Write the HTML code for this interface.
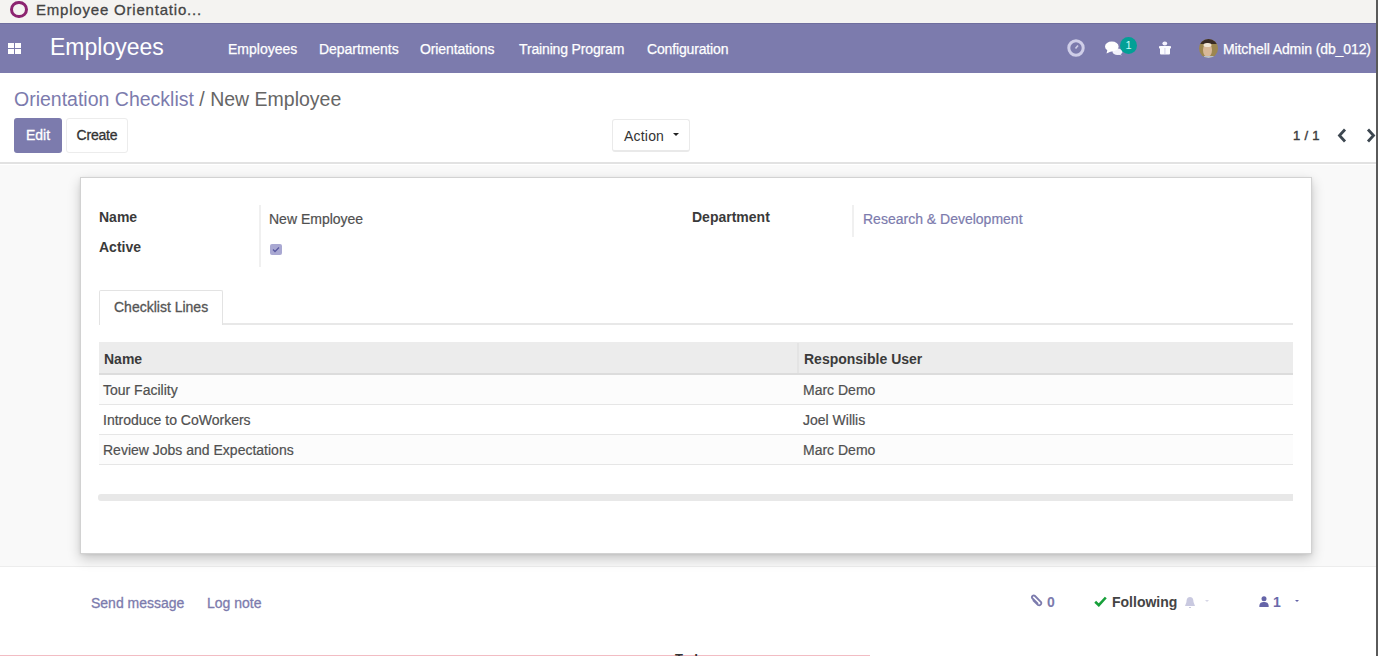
<!DOCTYPE html>
<html><head><meta charset="utf-8">
<style>
*{box-sizing:border-box;margin:0;padding:0}
html,body{width:1378px;height:656px;overflow:hidden;background:#fff;font-family:"Liberation Sans",sans-serif;color:#4c4c4c;position:relative}
.a{position:absolute;white-space:nowrap}
#tabbar{left:0;top:0;width:1378px;height:23px;background:#f4f3f1}
#nav{left:0;top:23px;width:1378px;height:50px;background:#7c7bad;border-top:1px solid #6f6e9e}
.nv{color:#fff;font-size:14px;top:41px;-webkit-text-stroke:0.25px #fff}
#cp{left:0;top:73px;width:1378px;height:91px;background:#fff;border-bottom:2px solid #e2e2e2}
#bg{left:0;top:165px;width:1378px;height:402px;background:#f9f9f9;border-bottom:1px solid #ededed}
#sheet{left:80px;top:177px;width:1232px;height:377px;background:#fff;border:1px solid #d2d2d2;box-shadow:0 5px 12px rgba(0,0,0,.2),0 1px 3px rgba(0,0,0,.08)}
.lbl{font-weight:bold;font-size:14px;color:#3a3a3a}
.val{font-size:14px;color:#505050;-webkit-text-stroke:0.2px currentColor}
.vl{width:2px;background:#f0f0f0}
.rl{left:99px;width:1194px;height:1px;background:#e6e6e6}
</style></head><body>
<div class="a" id="tabbar"></div>
<div class="a" style="left:10px;top:1px;width:17.5px;height:17px;border:3.8px solid #8c2470;border-radius:50%"></div>
<div class="a" style="left:36px;top:1px;font-size:15px;font-weight:normal;-webkit-text-stroke:0.3px #444;color:#444;letter-spacing:0.8px">Employee Orientatio...</div>

<div class="a" id="nav"></div>
<div class="a" style="left:8px;top:43px;width:6px;height:5px;background:#fff"></div>
<div class="a" style="left:15px;top:43px;width:6px;height:5px;background:#fff"></div>
<div class="a" style="left:8px;top:49px;width:6px;height:5px;background:#fff"></div>
<div class="a" style="left:15px;top:49px;width:6px;height:5px;background:#fff"></div>
<div class="a" style="left:50px;top:34px;font-size:23px;color:#fff">Employees</div>
<div class="a nv" style="left:228px;letter-spacing:0px">Employees</div>
<div class="a nv" style="left:319px;letter-spacing:-0.05px">Departments</div>
<div class="a nv" style="left:420px;letter-spacing:-0.1px">Orientations</div>
<div class="a nv" style="left:519px;letter-spacing:-0.15px">Training Program</div>
<div class="a nv" style="left:647px;letter-spacing:-0.15px">Configuration</div>
<div class="a nv" style="left:1223px;letter-spacing:-0.1px">Mitchell Admin (db_012)</div>

<!-- right nav icons -->
<svg class="a" style="left:1066px;top:38px" width="20" height="20" viewBox="0 0 20 20"><circle cx="10" cy="10" r="7.2" fill="none" stroke="#cfcee8" stroke-width="3"/><path d="M9.5 10.5 L12 7.5" fill="none" stroke="#cfcee8" stroke-width="1.6"/></svg>
<svg class="a" style="left:1104px;top:40px" width="20" height="16" viewBox="0 0 20 16"><ellipse cx="13.5" cy="11.8" rx="5" ry="3.2" fill="#f2f2fb"/><path d="M15 13 L18 15.5 L12 14Z" fill="#f2f2fb"/><ellipse cx="7.8" cy="6.5" rx="6.8" ry="5" fill="#fff"/><path d="M3.5 9.5 L2.5 13.5 L8 11Z" fill="#fff"/></svg>
<div class="a" style="left:1120px;top:37px;width:17px;height:17px;border-radius:50%;background:#02a096;color:#c8fbf6;font-size:11px;text-align:center;line-height:17px">1</div>
<svg class="a" style="left:1158px;top:40px" width="14" height="16" viewBox="0 0 14 16"><ellipse cx="6.8" cy="3.4" rx="2.4" ry="2" fill="#f4f2ff"/><rect x="2" y="6" width="10" height="8.5" rx="1" fill="#fbfbff"/><rect x="1" y="6.2" width="12" height="2.2" fill="#fbfbff"/><rect x="6.3" y="8" width="1.2" height="6" fill="#d8d6ee"/></svg>
<svg class="a" style="left:1198px;top:38px" width="21" height="21" viewBox="0 0 21 21"><defs><clipPath id="cc"><circle cx="10.5" cy="10.5" r="9.5"/></clipPath></defs><g clip-path="url(#cc)"><rect width="21" height="21" fill="#9c8650"/><rect x="0" y="0" width="21" height="6" fill="#3a2c24"/><ellipse cx="9.5" cy="12" rx="4.5" ry="7" fill="#d8b898"/><ellipse cx="9.5" cy="7" rx="4" ry="2" fill="#efe4d4"/><rect x="6" y="18" width="10" height="4" fill="#b8c0cc"/></g></svg>

<div class="a" id="cp"></div>
<div class="a" style="left:14px;top:88px;font-size:19.5px;color:#7c7bad">Orientation Checklist <span style="color:#666">/ New Employee</span></div>
<div class="a" style="left:14px;top:118px;width:48px;height:35px;background:#7c7bad;border-radius:3px;color:#fff;font-size:14px;line-height:35px;text-align:center;-webkit-text-stroke:0.3px #fff">Edit</div>
<div class="a" style="left:66px;top:118px;width:62px;height:35px;background:#fff;border:1px solid #ececec;border-radius:3px;color:#333;font-size:14px;line-height:33px;text-align:center;letter-spacing:-0.2px;-webkit-text-stroke:0.3px #333">Create</div>
<div class="a" style="left:612px;top:119px;width:78px;height:33px;background:#fff;border:1px solid #eaeaea;border-bottom:2px solid #e9e9e9;border-radius:3px;color:#333;font-size:14px;line-height:33px;padding-left:11px;letter-spacing:0.2px">Action</div>
<div class="a" style="left:673px;top:133px;width:0;height:0;border-left:3px solid transparent;border-right:3px solid transparent;border-top:3px solid #222"></div>
<div class="a" style="left:1293px;top:128px;font-size:13px;color:#3c3c3c;-webkit-text-stroke:0.4px #3c3c3c;letter-spacing:0.3px">1 / 1</div>
<svg class="a" style="left:1336px;top:128px" width="12" height="15" viewBox="0 0 12 15"><path d="M9 1.5 L3.5 7.5 L9 13.5" fill="none" stroke="#3d4750" stroke-width="2.8"/></svg>
<svg class="a" style="left:1365px;top:128px" width="12" height="15" viewBox="0 0 12 15"><path d="M3 1.5 L8.5 7.5 L3 13.5" fill="none" stroke="#3d4750" stroke-width="2.8"/></svg>

<div class="a" id="bg"></div>
<div class="a" id="sheet"></div>
<div class="a lbl" style="left:99px;top:209px">Name</div>
<div class="a lbl" style="left:99px;top:239px">Active</div>
<div class="a vl" style="left:259px;top:205px;height:62px"></div>
<div class="a val" style="left:269px;top:211px">New Employee</div>
<div class="a" style="left:270px;top:244px;width:12px;height:11px;background:#a9a8d2;border-radius:2px"></div>
<svg class="a" style="left:270px;top:244px" width="12" height="11" viewBox="0 0 12 11"><path d="M3 5.5 L5 7.5 L9 3.5" fill="none" stroke="#5a59a0" stroke-width="1.3"/></svg>
<div class="a lbl" style="left:692px;top:209px">Department</div>
<div class="a vl" style="left:852px;top:205px;height:32px"></div>
<div class="a val" style="left:863px;top:211px;color:#7c7bad">Research &amp; Development</div>

<div class="a" style="left:99px;top:323px;width:1194px;height:2px;background:#e8e8e8"></div>
<div class="a" style="left:99px;top:290px;width:124px;height:35px;border:1px solid #e3e3e3;border-bottom:none;background:#fff;font-size:14px;color:#555;line-height:33px;padding-left:14px;-webkit-text-stroke:0.3px #555;border-radius:2px 2px 0 0">Checklist Lines</div>

<div class="a" style="left:99px;top:342px;width:1194px;height:33px;background:#ececec;border-bottom:2px solid #dcdcdc"></div>
<div class="a" style="left:797px;top:343px;width:2px;height:30px;background:#e4e4e4"></div>
<div class="a lbl" style="left:104px;top:351px">Name</div>
<div class="a lbl" style="left:804px;top:351px">Responsible User</div>
<div class="a" style="left:99px;top:375px;width:1194px;height:29px;background:#fcfcfc"></div>
<div class="a" style="left:99px;top:435px;width:1194px;height:29px;background:#fcfcfc"></div>
<div class="a rl" style="top:404px"></div>
<div class="a rl" style="top:434px"></div>
<div class="a rl" style="top:464px"></div>
<div class="a val" style="left:103px;top:382px">Tour Facility</div>
<div class="a val" style="left:803px;top:382px">Marc Demo</div>
<div class="a val" style="left:103px;top:412px">Introduce to CoWorkers</div>
<div class="a val" style="left:803px;top:412px">Joel Willis</div>
<div class="a val" style="left:103px;top:442px">Review Jobs and Expectations</div>
<div class="a val" style="left:803px;top:442px">Marc Demo</div>
<div class="a" style="left:98px;top:494px;width:1195px;height:7px;background:#e8e8e8;border-radius:3px 0 0 3px"></div>

<div class="a" style="left:91px;top:595px;font-size:14px;color:#7c7bad;-webkit-text-stroke:0.3px #7c7bad">Send message</div>
<div class="a" style="left:207px;top:595px;font-size:14px;color:#7c7bad;-webkit-text-stroke:0.3px #7c7bad">Log note</div>

<svg class="a" style="left:1029px;top:594px" width="15" height="15" viewBox="0 0 15 15"><path d="M4 6 L9 11 A2.2 2.2 0 0 0 12 8 L6 2 A1.5 1.5 0 0 0 3.5 4.5 L9 10" fill="none" stroke="#7c7bad" stroke-width="1.8"/></svg>
<div class="a" style="left:1047px;top:594px;font-size:14px;font-weight:bold;color:#7c7bad">0</div>
<svg class="a" style="left:1094px;top:596px" width="13" height="11" viewBox="0 0 13 11"><path d="M1.2 5.8 L4.8 9.2 L11.8 1.5" fill="none" stroke="#17a03a" stroke-width="2.6"/></svg>
<div class="a" style="left:1112px;top:594px;font-size:14px;font-weight:bold;color:#444">Following</div>
<svg class="a" style="left:1184px;top:596px" width="12" height="13" viewBox="0 0 12 13"><path d="M6 1 C3 1 2.5 4 2.5 6 L1 10 H11 L9.5 6 C9.5 4 9 1 6 1Z M5 11 H7 V12 H5Z" fill="#c9c9e0"/></svg>
<div class="a" style="left:1205px;top:600px;width:0;height:0;border-left:2.5px solid transparent;border-right:2.5px solid transparent;border-top:2.5px solid #d6d6e6"></div>
<svg class="a" style="left:1259px;top:596px" width="10" height="11" viewBox="0 0 10 11"><circle cx="5" cy="2.8" r="2.5" fill="#6564a8"/><path d="M0.3 11 C0.3 6.5 2.5 6 5 6 C7.5 6 9.7 6.5 9.7 11Z" fill="#6564a8"/></svg>
<div class="a" style="left:1273px;top:594px;font-size:14px;font-weight:bold;color:#6a69aa">1</div>
<div class="a" style="left:1295px;top:600px;width:0;height:0;border-left:2.5px solid transparent;border-right:2.5px solid transparent;border-top:2.5px solid #6564a8"></div>

<div class="a" style="left:0;top:655px;width:870px;height:1px;background:#f2bcc3"></div>
<div class="a" style="left:675px;top:651px;font-size:13px;font-weight:bold;color:#333">Today</div>
<div class="a" style="left:1376px;top:0;width:2px;height:656px;background:#5a5a5a"></div>
</body></html>
